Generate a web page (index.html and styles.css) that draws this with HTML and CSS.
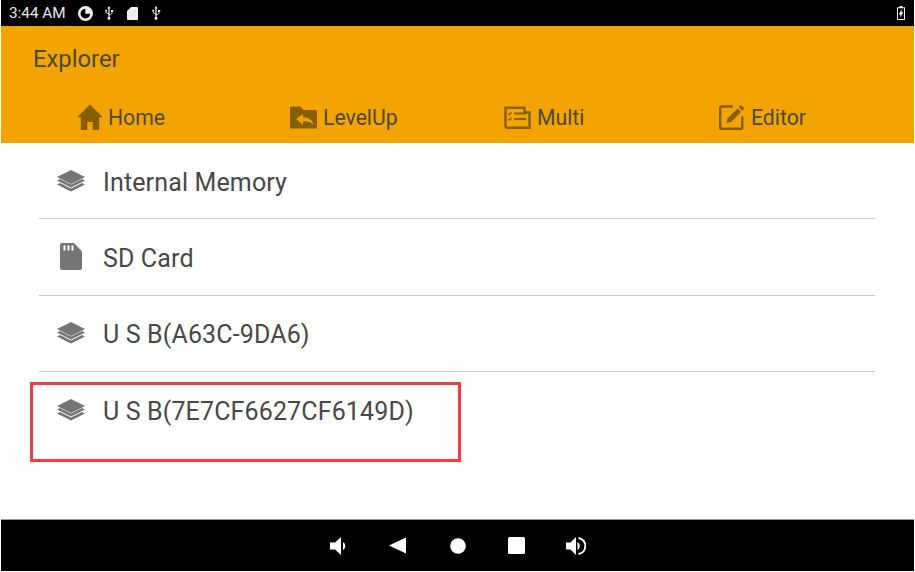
FILE: index.html
```html
<!DOCTYPE html>
<html lang="en">
<head>
<meta charset="utf-8">
<title>Explorer</title>
<link rel="stylesheet" href="styles.css">
</head>
<body>
<div class="screen">
  <div class="status">
    <div class="status-left">
      <span class="clock">3:44 AM</span>
      <svg class="si pie" viewBox="0 0 14 14"><path fill="#eee" fill-rule="evenodd" d="M7 0a7 7 0 1 0 0 14A7 7 0 0 0 7 0zM6.800 2.600A4.500 4.500 0 1 0 11.400 7.200H6.800z"/></svg>
      <svg class="si usb" viewBox="0 0 10 14"><path fill="#eee" d="M5 0l1.600 2.400H5.600v6.100l2-1.300V6H7V4h2.200v2h-.8v1.600L5.600 9.600v1.500a1.400 1.400 0 1 1-1.200 0V8.400L1.700 6.600V5.400a1 1 0 1 1 .9 0v.8l1.800 1.100V2.400h-1z"/></svg>
      <svg class="si sd" viewBox="0 0 11 13"><path fill="#eee" d="M4 0h6a1 1 0 0 1 1 1v11a1 1 0 0 1-1 1H1a1 1 0 0 1-1-1V4z"/></svg>
      <svg class="si usb" viewBox="0 0 10 14"><path fill="#eee" d="M5 0l1.600 2.400H5.600v6.100l2-1.300V6H7V4h2.200v2h-.8v1.600L5.600 9.600v1.500a1.400 1.400 0 1 1-1.200 0V8.400L1.700 6.600V5.400a1 1 0 1 1 .9 0v.8l1.800 1.100V2.400h-1z"/></svg>
    </div>
    <svg class="battery" viewBox="0 0 8 14"><path fill="#eee" fill-rule="evenodd" d="M2.500 0h3v1.200H8V14H0V1.200h2.500zM1 2.200V13h6V2.200z"/><path fill="#fff" d="M5 2.800L1.800 8.400h1.800l-.6 3.400L6.300 6.200H4.400z"/></svg>
  </div>

  <header class="appbar">
    <div class="title">Explorer</div>
    <nav class="tabs">
      <div class="tab tab-home">
        <svg class="tab-icon" viewBox="0 0 26 26"><path fill="#875f00" d="M13 .5L.2 13.200h3.600V25a.9.9 0 0 0 .9.9h5.600v-8h5.400v8h5.600a.9.9 0 0 0 .9-.9V13.200h3.600z"/></svg>
        <span>Home</span>
      </div>
      <div class="tab tab-up">
        <svg class="tab-icon wide" viewBox="0 0 27 22"><path fill="#875f00" d="M1.500 0h9l3 3.400h12a1.500 1.500 0 0 1 1.500 1.500v15.600a1.500 1.500 0 0 1-1.500 1.500h-24A1.500 1.500 0 0 1 0 20.500V1.500A1.500 1.500 0 0 1 1.500 0z"/><path fill="#f4a400" d="M13 7.500v3.200c5.800.2 9.300 2.800 11 8.300-2.400-3.300-5.500-4.200-11-4.200v3.400L6 12.500z"/></svg>
        <span>LevelUp</span>
      </div>
      <div class="tab tab-multi">
        <svg class="tab-icon wide" viewBox="0 0 27 23"><path fill="none" stroke="#875f00" stroke-width="2.500" d="M20.500 6.500V1.800H1.500v18a2 2 0 0 0 2 2h22V6.500z"/><path fill="none" stroke="#875f00" stroke-width="2" d="M10 7.500h12M10 13h12"/><path fill="none" stroke="#875f00" stroke-width="1.400" d="M4.500 7.500l1 1 2-2M4.500 13l1 1 2-2"/></svg>
        <span>Multi</span>
      </div>
      <div class="tab tab-edit">
        <svg class="tab-icon" viewBox="0 0 26 26"><path fill="none" stroke="#875f00" stroke-width="2.400" d="M14 2.500H2.500a1.300 1.300 0 0 0-1.300 1.300V23.500a1.300 1.300 0 0 0 1.300 1.300H22a1.300 1.300 0 0 0 1.300-1.300V12.500"/><path fill="#875f00" d="M8.500 14.500l10-10 3.500 3.500-10 10-4.500 1zM19.800 3.200l1.600-1.600a1 1 0 0 1 1.400 0l2.100 2.100a1 1 0 0 1 0 1.400l-1.600 1.600z"/></svg>
        <span>Editor</span>
      </div>
    </nav>
  </header>

  <main class="list">
    <div class="row">
      <svg class="row-icon" viewBox="0 0 28 22"><path fill="#757575" d="M14 0l14 7-14 7L0 7z"/><path fill="#757575" d="M0 10.500l3-1.400 11 5.500 11-5.500 3 1.400-14 7z"/><path fill="#757575" d="M0 14.500l3-1.400 11 5.500 11-5.500 3 1.400-14 7z"/></svg>
      <span class="row-text">Internal Memory</span>
    </div>
    <div class="row">
      <svg class="row-icon sdcard" viewBox="0 0 22 27"><path fill="#757575" fill-rule="evenodd" d="M2 0h12l8 8.500V25a2 2 0 0 1-2 2H2a2 2 0 0 1-2-2V2a2 2 0 0 1 2-2zM3.500 2.500v5h2v-5zM7.500 2.500v5h2v-5zM11.500 2.500v5h2v-5z"/></svg>
      <span class="row-text">SD Card</span>
    </div>
    <div class="row">
      <svg class="row-icon" viewBox="0 0 28 22"><path fill="#757575" d="M14 0l14 7-14 7L0 7z"/><path fill="#757575" d="M0 10.500l3-1.400 11 5.500 11-5.500 3 1.400-14 7z"/><path fill="#757575" d="M0 14.500l3-1.400 11 5.500 11-5.500 3 1.400-14 7z"/></svg>
      <span class="row-text">U S B(A63C-9DA6)</span>
    </div>
    <div class="row last">
      <svg class="row-icon" viewBox="0 0 28 22"><path fill="#757575" d="M14 0l14 7-14 7L0 7z"/><path fill="#757575" d="M0 10.500l3-1.400 11 5.500 11-5.500 3 1.400-14 7z"/><path fill="#757575" d="M0 14.500l3-1.400 11 5.500 11-5.500 3 1.400-14 7z"/></svg>
      <span class="row-text">U S B(7E7CF6627CF6149D)</span>
    </div>
    <div class="highlight"></div>
  </main>

  <footer class="navbar">
    <svg class="nav-icon vol-low" viewBox="0 0 18 18"><path fill="#fff" d="M0 5.500h5L11 0v18l-6-5.500H0z"/><path fill="#fff" d="M13 5c3 2 3 6 0 8z"/></svg>
    <svg class="nav-icon back" viewBox="0 0 17 17"><path fill="#fff" d="M17 .5v16L0 8.500z"/></svg>
    <svg class="nav-icon home" viewBox="0 0 16 16"><circle fill="#fff" cx="8" cy="8" r="7.800"/></svg>
    <svg class="nav-icon stop" viewBox="0 0 17 17"><rect fill="#fff" width="17" height="17" rx="1.500"/></svg>
    <svg class="nav-icon vol-high" viewBox="0 0 21 18"><path fill="#fff" d="M0 5.500h4.500L10 0v18l-5.500-5.500H0z"/><path fill="#fff" d="M11.500 5c3 2 3 6 0 8z"/><path fill="none" stroke="#fff" stroke-width="1.800" d="M12.500 1c9 2 9 14 0 16"/></svg>
  </footer>
</div>
</body>
</html>
```

FILE: styles.css
```css
* { box-sizing: border-box; }
html, body { margin: 0; padding: 0; background: #fff; }
body { width: 915px; height: 572px; overflow: hidden; font-family: Roboto, "Liberation Sans", sans-serif; }
.screen { width: 915px; height: 572px; display: flex; flex-direction: column; padding: 0 1px; }

.status { height: 26px; background: #000; display: flex; align-items: center; justify-content: space-between; padding: 0 9px 0 8px; flex: none; }
.status-left { display: flex; align-items: center; }
.clock { color: #e8e8e8; font-size: 15.300px; line-height: 26px; width: 69px; }
.si { display: block; }
.pie { width: 15px; height: 15px; }
.usb { width: 10px; height: 14px; margin-left: 11px; }
.sd { width: 11px; height: 13px; margin-left: 13px; }
.sd + .usb { margin-left: 13px; }
.battery { width: 8px; height: 14px; }

.appbar { height: 117px; background: #f4a400; flex: none; display: flex; flex-direction: column; }
.title { color: #4a4a3e; font-size: 23.800px; line-height: 28px; padding: 19px 0 0 32px; height: 74px; }
.tabs { display: flex; height: 43px; }
.tab { display: flex; align-items: center; color: #4d4a3c; font-size: 21.200px; height: 34px; }
.tab-icon { width: 26px; height: 26px; display: block; flex: none; }
.tab-icon.wide { width: 27px; height: 23px; }
.tab-home { margin-left: 76px; width: 213px; gap: 5px; }
.tab-up { width: 214px; gap: 6px; }
.tab-multi { width: 215px; gap: 6px; }
.tab-edit { gap: 6px; }

.list { flex: 1; position: relative; padding: 0 39px 0 38px; background: #fff; }
.row { height: 76.300px; display: flex; align-items: center; border-bottom: 1px solid #c8c8c8; padding-left: 18px; }
.row.last { border-bottom: 0; }
.row-icon { width: 28px; height: 22px; flex: none; margin-right: 18px; }
.row-icon.sdcard { width: 22px; height: 27px; margin: 0 21px 0 3px; }
.row-text { color: #484848; font-size: 25px; line-height: 30px; letter-spacing: .14px; margin-top: 4px; }
.highlight { position: absolute; left: 29px; top: 239px; width: 431px; height: 80px; border: 3px solid #f93a3f; }

.navbar { height: 52px; background: #000; border-top: 1px solid #999; margin-bottom: 1px; flex: none; display: flex; align-items: center; justify-content: center; gap: 41px; padding-left: 2px; }
.nav-icon { display: block; flex: none; }
.vol-low { width: 18px; height: 18px; }
.back { width: 17px; height: 17px; }
.home { width: 16px; height: 16px; margin-left: 3px; }
.stop { width: 17px; height: 17px; margin-left: 1px; }
.vol-high { width: 21px; height: 18px; }
```
